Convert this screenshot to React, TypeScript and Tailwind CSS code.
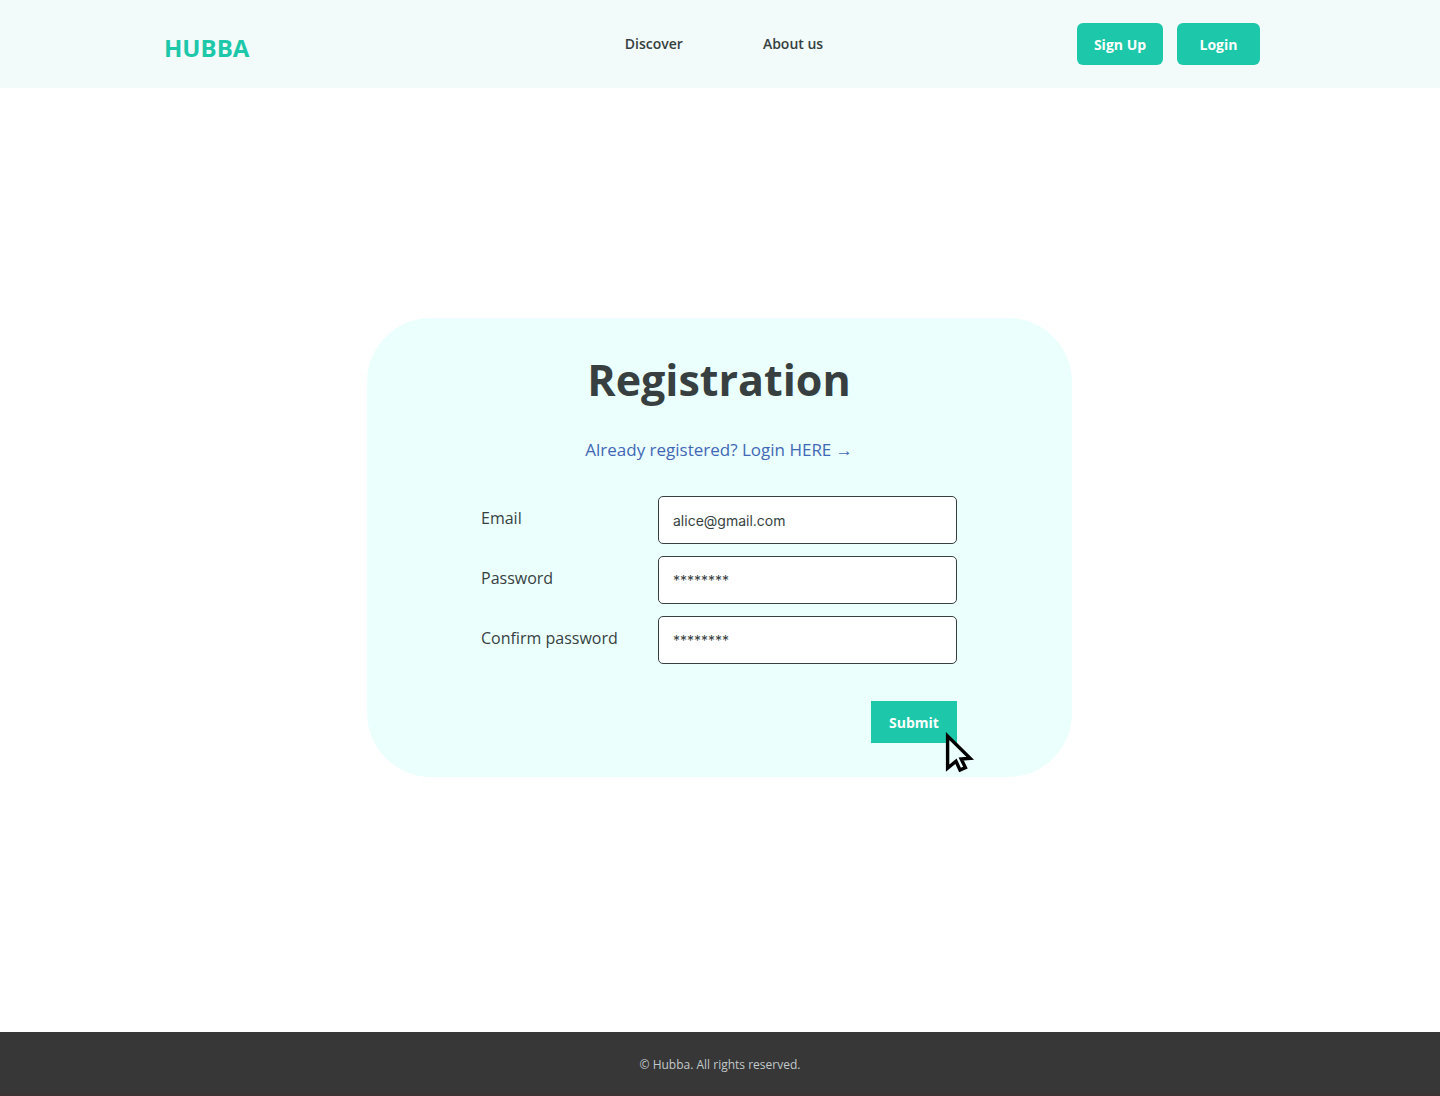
import React from "react";

const fields = [
  { id: "email", label: "Email", type: "email", value: "alice@gmail.com" },
  { id: "password", label: "Password", type: "text", value: "********" },
  { id: "confirm", label: "Confirm password", type: "text", value: "********" },
];

function Header() {
  return (
    <header className="grid min-h-[88px] grid-cols-[1fr_auto_1fr] items-center bg-[#f2fbfa]">
      <a href="#" className="mt-2 pl-[164px] text-[24px] leading-8 font-bold text-[#1dc7a9]">
        HUBBA
      </a>
      <nav className="flex gap-20 pl-2 text-[14px] leading-5 font-semibold text-[#373f41]">
        <a href="#discover">Discover</a>
        <a href="#about">About us</a>
      </nav>
      <div className="flex justify-end gap-3.5 pr-[180px] text-[14px] font-bold text-white">
        <button type="button" className="h-[42px] w-[86px] rounded-md bg-[#1dc7a9]">
          Sign Up
        </button>
        <button type="button" className="h-[42px] w-[83px] rounded-md bg-[#1dc7a9]">
          Login
        </button>
      </div>
    </header>
  );
}

function Cursor() {
  return (
    <svg
      aria-hidden="true"
      className="pointer-events-none absolute top-[30px] left-[74px] h-[42px] w-[30px]"
      viewBox="0 0 30 42"
      fill="none"
    >
      <path
        d="M2.6 5V37.2L11 30.2L15 39L20.4 36.6L16.2 28L25.2 27.3Z"
        fill="#ebfffd"
        stroke="#000"
        strokeWidth="3.4"
      />
    </svg>
  );
}

function RegistrationForm() {
  return (
    <section className="flex w-full max-w-[705px] flex-col items-center rounded-[64px] bg-[#ebfffd] px-6 pt-8 pb-[34px]">
      <h1 className="text-[43px] leading-[60px] font-bold text-[#373f41]">Registration</h1>
      <a href="#login" className="mt-7 text-[17px] leading-6 text-[#3f68b5]">
        Already registered? Login HERE →
      </a>
      <form className="mt-[34px] w-full max-w-[476px]" onSubmit={(e) => e.preventDefault()}>
        <div className="flex flex-col gap-3">
          {fields.map((f) => (
            <div key={f.id} className="grid grid-cols-[1fr_299px] items-center">
              <label htmlFor={f.id} className="pb-1 text-[16px] leading-6 text-[#373f41]">
                {f.label}
              </label>
              <input
                id={f.id}
                type={f.type}
                defaultValue={f.value}
                className="h-12 w-full rounded-[5px] border border-[#373f41] bg-white px-3.5 font-['Inter',sans-serif] text-[14px] text-[#373f41] outline-none"
              />
            </div>
          ))}
        </div>
        <div className="mt-[37px] flex justify-end">
          <div className="relative">
            <button type="submit" className="h-[42px] w-[86px] bg-[#1dc7a9] text-[14px] font-bold text-white">
              Submit
            </button>
            <Cursor />
          </div>
        </div>
      </form>
    </section>
  );
}

export default function App() {
  return (
    <div className="flex min-h-screen flex-col bg-white font-['Open_Sans',sans-serif]">
      <Header />
      <main className="flex flex-1 items-center justify-center pr-[18px] pb-[25px] pl-4">
        <RegistrationForm />
      </main>
      <footer className="flex min-h-16 items-center justify-center border-b-3 border-[#3a3435] bg-[#373737] pt-1 text-[12px] leading-4 font-medium text-[#c3c9cb]">
        © Hubba. All rights reserved.
      </footer>
    </div>
  );
}
